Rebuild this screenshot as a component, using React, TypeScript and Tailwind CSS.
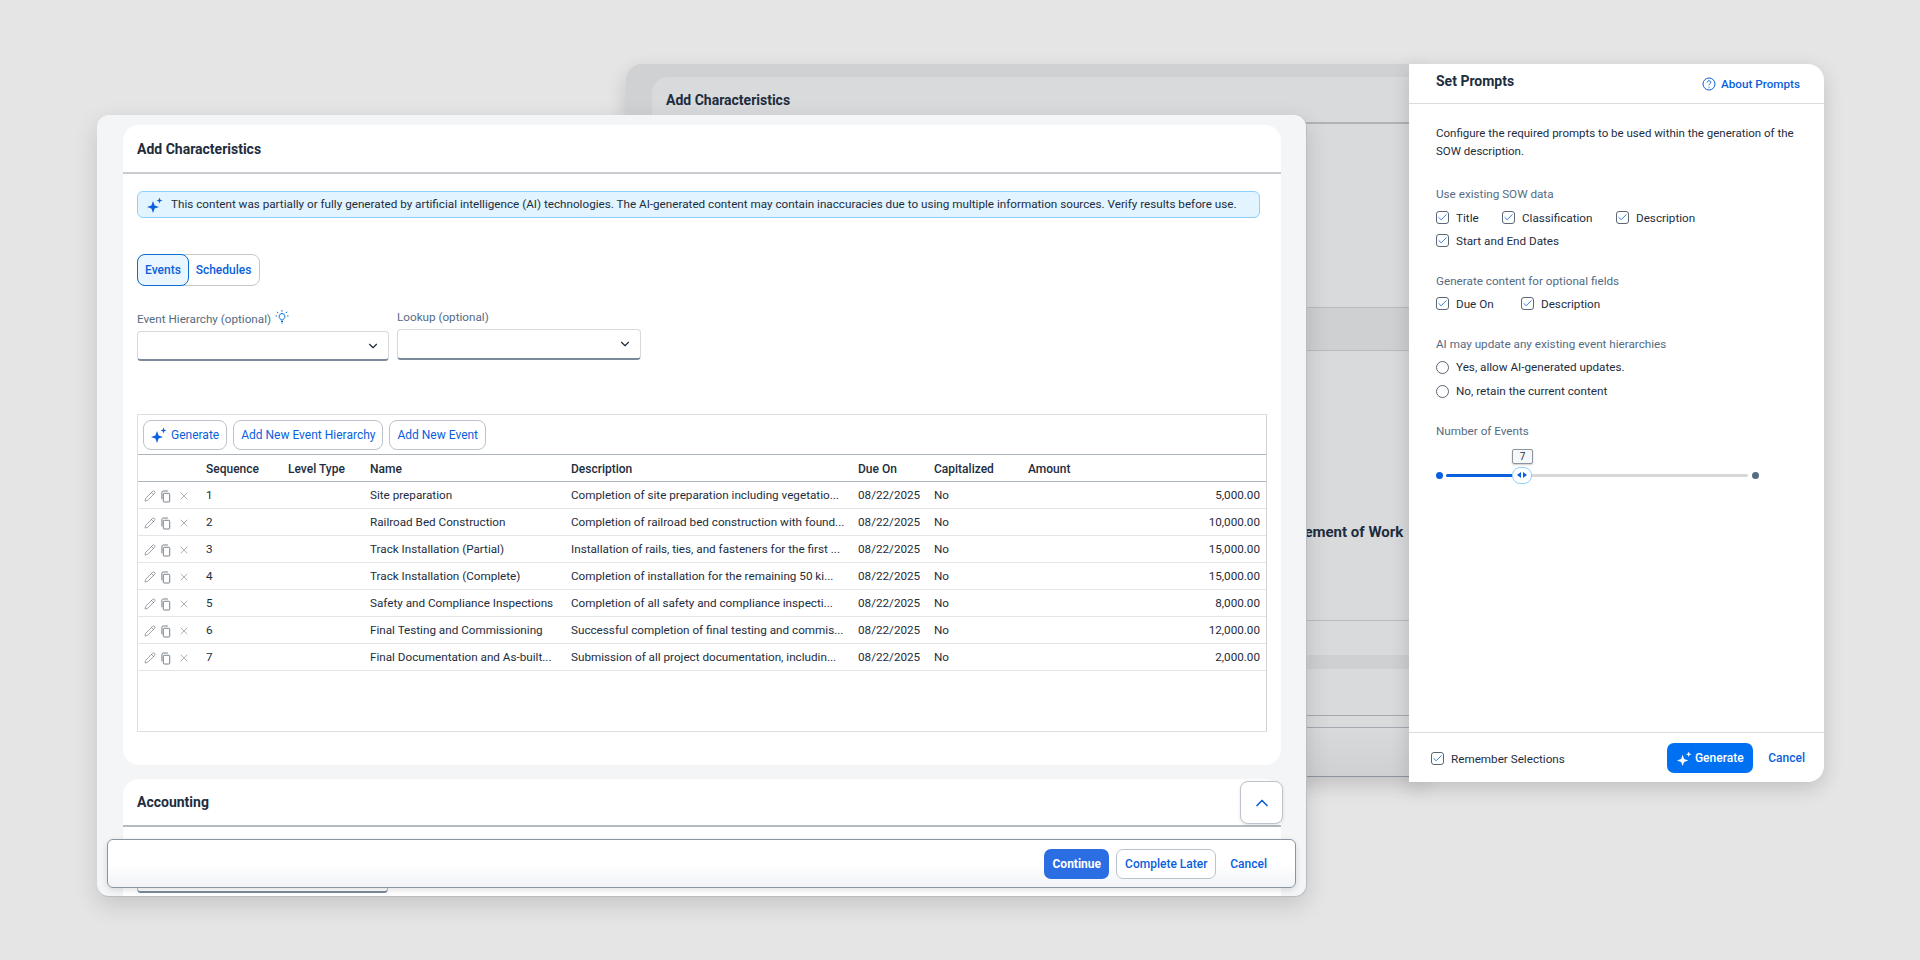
import { Check, ChevronDown, ChevronUp, Pencil, X } from "lucide-react";

const rows = [
  ["1", "Site preparation", "Completion of site preparation including vegetatio...", "5,000.00"],
  ["2", "Railroad Bed Construction", "Completion of railroad bed construction with found...", "10,000.00"],
  ["3", "Track Installation (Partial)", "Installation of rails, ties, and fasteners for the first ...", "15,000.00"],
  ["4", "Track Installation (Complete)", "Completion of installation for the remaining 50 ki...", "15,000.00"],
  ["5", "Safety and Compliance Inspections", "Completion of all safety and compliance inspecti...", "8,000.00"],
  ["6", "Final Testing and Commissioning", "Successful completion of final testing and commis...", "12,000.00"],
  ["7", "Final Documentation and As-built...", "Submission of all project documentation, includin...", "2,000.00"],
];

const gridCols = "grid grid-cols-[68px_82px_82px_201px_287px_76px_94px_1fr] items-center";

function Sparkle({ className }: { className?: string }) {
  return (
    <svg viewBox="0 0 16 16" className={`shrink-0 ${className ?? ""}`} fill="currentColor">
      <path d="M6 4L7.6 8.4L12 10L7.6 11.6L6 16L4.4 11.6L0 10L4.4 8.4Z" />
      <path d="M12.5 0.5L13.3 2.7L15.5 3.5L13.3 4.3L12.5 6.5L11.7 4.3L9.5 3.5L11.7 2.7Z" />
    </svg>
  );
}

function CopyIcon() {
  return (
    <svg viewBox="0 0 12 14" className="h-[13px] w-[11px]" fill="none" stroke="#6a7480" strokeWidth="1">
      <rect x="2.5" y="3.5" width="7" height="9.5" rx="1" />
      <path d="M1 10V2.5C1 1.6 1.6 1 2.5 1H7.5" />
    </svg>
  );
}

function Bulb() {
  return (
    <svg viewBox="0 0 16 16" className="h-4 w-4" fill="none" stroke="#0a6ed1" strokeWidth="1">
      <path d="M8 4.5a3 3 0 0 0-1.7 5.4c.4.3.6.7.6 1.1h2.2c0-.4.2-.8.6-1.1A3 3 0 0 0 8 4.5Z" />
      <path d="M7 12.5h2M7.4 14h1.2M8 1v1.6M3 2.8l1 1.2M13 2.8l-1 1.2M1.5 7h1.4M13.1 7h1.4" />
    </svg>
  );
}

function Tick({ label, className }: { label: string; className?: string }) {
  return (
    <div className={`flex h-[18px] items-center gap-[7px] ${className ?? ""}`}>
      <span className="flex h-[13px] w-[13px] items-center justify-center rounded-[3px] border border-[#5b6775] bg-white">
        <Check size={11} strokeWidth={1.75} className="text-[#0a5fdc]" />
      </span>
      <span className="pt-px text-[11.7px] leading-[18px] text-[#1d2d3e]">{label}</span>
    </div>
  );
}

function Radio({ label }: { label: string }) {
  return (
    <div className="flex h-[18px] items-center gap-[7px]">
      <span className="h-[13px] w-[13px] rounded-full border border-[#5b6775] bg-white" />
      <span className="text-[11.7px] leading-[18px] text-[#1d2d3e]">{label}</span>
    </div>
  );
}

function GroupLabel({ children, className }: { children: string; className?: string }) {
  return <div className={`text-[11.7px] leading-[18px] text-[#556b82] ${className ?? ""}`}>{children}</div>;
}

function Select({ className }: { className: string }) {
  return (
    <div className={`flex items-center justify-end rounded-[4px] border border-[#d5dadd] border-b-2 border-b-[#7b8a9a] bg-white pr-[8px] ${className}`}>
      <ChevronDown size={14} strokeWidth={2} className="text-[#1d2d3e]" />
    </div>
  );
}

function ToolbarButton({ children }: { children: React.ReactNode }) {
  return (
    <button className="flex h-[30px] items-center gap-[4px] rounded-[8px] border border-[#bcc3ca] bg-white px-[7px] text-[12px] text-[#0a5fdc]">
      {children}
    </button>
  );
}

function BackWindow() {
  return (
    <div className="absolute left-[626px] top-[64px] flex h-[713px] w-[800px] flex-col rounded-tl-[16px] bg-[#d0d1d2] pl-[26px] pt-[13px] shadow-[0_8px_20px_rgba(0,0,0,0.16)]">
      <div className="flex h-[47px] items-center rounded-tl-[16px] border-b-2 border-[#aeb3b8] bg-[#d9dadb] pl-[14px] pt-[2px] text-[14px] font-bold text-[#1d2d3e]">
        Add Characteristics
      </div>
      <div className="flex flex-1 flex-col bg-[#d9dadb]">
        <div className="h-[183px]" />
        <div className="h-[44px] border-y border-[#b7bcc1] bg-[#cfd0d2]" />
        <div className="flex h-[270px] flex-col border-b border-[#b7bcc1]">
          <div className="mt-[171px] pl-[625px] text-[15px] font-bold leading-[20px] whitespace-nowrap text-[#1d2d3e]">Statement of Work</div>
        </div>
        <div className="mt-[34px] h-[14px] bg-[#cfd0d2]" />
        <div className="mt-[46px] h-[13px] border-y border-[#a3a9b0]" />
        <div className="h-[48px] bg-gradient-to-b from-[#d9dadb] to-[#cfd0d1]" />
        <div className="h-px bg-[#8d949c]" />
      </div>
    </div>
  );
}

function MainWindow() {
  return (
    <div className="absolute left-[97px] top-[115px] h-[782px] w-[1210px] overflow-hidden rounded-[12px] border-r border-b border-[#b8bdc2] bg-[#f4f5f7] px-[26px] pt-[10px] shadow-[0_8px_24px_rgba(0,0,0,0.14)]">
      <section className="h-[640px] w-[1158px] rounded-[16px] bg-white">
        <h2 className="flex h-[49px] items-center border-b-2 border-[#c9cdd2] pl-[14px] pt-[2px] text-[14px] font-bold text-[#1d2d3e]">Add Characteristics</h2>
        <div className="px-[14px]">
          <div className="mt-[17px] flex h-[27px] w-[1123px] items-center gap-[8px] rounded-[6px] border border-[#8fd0fb] bg-[#e1f4ff] pl-[9px] text-[11.7px] text-[#1d2d3e]">
            <Sparkle className="h-[16px] w-[16px] text-[#0a5fdc]" />
            <span className="whitespace-nowrap">
              This content was partially or fully generated by artificial intelligence (AI) technologies. The AI-generated content may contain inaccuracies due to using multiple information sources. Verify results before use.
            </span>
          </div>

          <div className="mt-[36px] flex h-[32px] w-[123px] rounded-[8px] border border-[#c3c8cd] bg-white text-[12px] font-medium text-[#0a5fdc]">
            <span className="-m-px flex w-[52px] items-center justify-center rounded-[8px] border border-[#0a6ed1] bg-[#eaf6ff]">Events</span>
            <span className="flex flex-1 items-center justify-center">Schedules</span>
          </div>

          <div className="mt-[23px] flex gap-[8px]">
            <div className="w-[252px]">
              <div className="flex h-[19px] items-center gap-[3px] pt-[2px] text-[11.7px] text-[#556b82]">
                Event Hierarchy (optional)
                <span className="-mt-[6px]"><Bulb /></span>
              </div>
              <Select className="mt-[3px] h-[30px] w-[252px]" />
            </div>
            <div className="w-[244px]">
              <div className="-mt-px h-[19px] text-[11.7px] leading-[19px] text-[#556b82]">Lookup (optional)</div>
              <Select className="mt-[2px] h-[31px] w-[244px]" />
            </div>
          </div>

          <div className="mt-[53px] flex h-[318px] w-[1130px] flex-col border border-[#dde0e3] border-r-[#d0d4d8]">
            <div className="flex h-[40px] shrink-0 items-center gap-[6px] border-b border-[#aeb5bc] pl-[5px]">
              <ToolbarButton>
                <Sparkle className="h-[16px] w-[16px]" />
                Generate
              </ToolbarButton>
              <ToolbarButton>Add New Event Hierarchy</ToolbarButton>
              <ToolbarButton>Add New Event</ToolbarButton>
            </div>
            <div className={`${gridCols} h-[27px] shrink-0 border-b border-[#aeb5bc] pt-[2px] text-[12px] font-medium text-[#1d2d3e]`}>
              <span />
              <span>Sequence</span>
              <span>Level Type</span>
              <span>Name</span>
              <span>Description</span>
              <span>Due On</span>
              <span>Capitalized</span>
              <span>Amount</span>
            </div>
            {rows.map(([seq, name, desc, amount]) => (
              <div key={seq} className={`${gridCols} h-[27px] shrink-0 border-b border-[#e3e6e8] pt-[2px] text-[11.7px] text-[#1d2d3e]`}>
                <span className="flex items-center gap-[5px] pl-[6px]">
                  <Pencil size={12} strokeWidth={1.1} className="text-[#4f5a66]" />
                  <CopyIcon />
                  <X size={12} strokeWidth={1} className="ml-[1px] text-[#5b6775]" />
                </span>
                <span>{seq}</span>
                <span />
                <span className="whitespace-nowrap">{name}</span>
                <span className="whitespace-nowrap">{desc}</span>
                <span>08/22/2025</span>
                <span>No</span>
                <span className="pr-[6px] text-right">{amount}</span>
              </div>
            ))}
          </div>
        </div>
      </section>

      <section className="mt-[14px] h-[131px] w-[1158px] rounded-t-[16px] bg-white">
        <h2 className="flex h-[48px] items-center border-b-2 border-[#b4bac1] pl-[14px] text-[14px] font-bold text-[#1d2d3e]">Accounting</h2>
        <div className="ml-[14px] mt-[59px] h-[7px] w-[251px] rounded-b-[4px] border border-[#b7bdc4] border-b-2 border-b-[#7b8a9a]" />
      </section>

      <button className="absolute left-[1143px] top-[666px] flex h-[43px] w-[43px] items-center justify-center rounded-[8px] border border-[#bcc3ca] bg-white shadow-[0_1px_3px_rgba(0,0,0,0.12)]">
        <ChevronUp size={20} strokeWidth={2} className="text-[#0a5fdc]" />
      </button>

      <div className="absolute left-[10px] top-[724px] flex h-[49px] w-[1189px] items-center justify-end rounded-[6px] border border-[#8b95a0] bg-gradient-to-b from-white from-50% to-[#f1f3f5] pr-[28px] text-[12px] font-medium shadow-[0_2px_6px_rgba(0,0,0,0.12)]">
        <button className="mr-[7px] flex h-[30px] w-[65px] items-center justify-center rounded-[7px] bg-[#2b6de3] font-bold text-white">Continue</button>
        <button className="mr-[14px] flex h-[30px] w-[100px] items-center justify-center rounded-[7px] border border-[#bcc3ca] bg-white text-[#0a5fdc]">Complete Later</button>
        <button className="text-[#0a5fdc]">Cancel</button>
      </div>
    </div>
  );
}

function PromptsPanel() {
  return (
    <aside className="absolute left-[1409px] top-[64px] flex h-[718px] w-[415px] flex-col rounded-r-[16px] bg-white shadow-[0_6px_20px_rgba(0,0,0,0.16)]">
      <header className="flex h-[40px] shrink-0 items-start justify-between border-b border-[#d9dde1] pl-[27px] pr-[24px]">
        <h3 className="mt-[7px] text-[14px] font-bold leading-[20px] text-[#1d2d3e]">Set Prompts</h3>
        <a className="mt-[11px] flex items-center gap-[5px] text-[11.7px] font-medium leading-[18px] text-[#0a5fdc]">
          <svg viewBox="0 0 14 14" className="h-[14px] w-[14px]" fill="none" stroke="#0a5fdc" strokeWidth="1">
            <circle cx="7" cy="7" r="6" />
            <path d="M5.2 5.4C5.2 4.4 6 3.8 7 3.8s1.8.6 1.8 1.5c0 1.4-1.8 1.4-1.8 2.9M7 9.6v1" />
          </svg>
          About Prompts
        </a>
      </header>

      <div className="flex-1 px-[27px] pt-[20px]">
        <p className="text-[11.5px] leading-[18px] text-[#1d2d3e]">
          Configure the required prompts to be used within the generation of the SOW description.
        </p>

        <GroupLabel className="mt-[25px]">Use existing SOW data</GroupLabel>
        <div className="mt-[5px] flex">
          <Tick label="Title" className="w-[66px]" />
          <Tick label="Classification" className="w-[114px]" />
          <Tick label="Description" />
        </div>
        <Tick label="Start and End Dates" className="mt-[5px]" />

        <GroupLabel className="mt-[23px]">Generate content for optional fields</GroupLabel>
        <div className="mt-[4px] flex">
          <Tick label="Due On" className="w-[85px]" />
          <Tick label="Description" />
        </div>

        <GroupLabel className="mt-[23px]">AI may update any existing event hierarchies</GroupLabel>
        <div className="mt-[5px] flex flex-col gap-[6px]">
          <Radio label="Yes, allow AI-generated updates." />
          <Radio label="No, retain the current content" />
        </div>

        <GroupLabel className="mt-[22px]">Number of Events</GroupLabel>
        <div className="mt-[26px] flex h-[18px] w-[323px] items-center">
          <span className="h-[7px] w-[7px] rounded-full bg-[#0a5fdc]" />
          <span className="ml-[3px] h-[3px] w-[66px] rounded-l-full bg-[#0a5fdc]" />
          <span className="relative flex h-[17px] w-[20px] items-center justify-center gap-[2px] rounded-[8px] border border-[#8fd0fb] bg-white">
            <span className="absolute -top-[19px] left-[-1px] flex h-[15px] w-[21px] items-center justify-center rounded-[2px] border border-[#8b95a0] bg-[#f6f7f8] text-[10px] text-[#1d2d3e] shadow-[0_1px_2px_rgba(0,0,0,0.2)]">7</span>
            <span className="h-0 w-0 border-y-[3.5px] border-r-[4px] border-y-transparent border-r-[#0a5fdc]" />
            <span className="h-0 w-0 border-y-[3.5px] border-l-[4px] border-y-transparent border-l-[#0a5fdc]" />
          </span>
          <span className="h-[3px] flex-1 rounded-r-full bg-[#d5d7d9]" />
          <span className="ml-[4px] h-[7px] w-[7px] rounded-full bg-[#556b82]" />
        </div>
      </div>

      <footer className="flex h-[50px] shrink-0 items-center border-t border-[#d9dde1] pl-[22px] pr-[19px] pt-px">
        <Tick label="Remember Selections" />
        <button className="ml-auto flex h-[30px] w-[86px] items-center justify-center gap-[3px] rounded-[7px] bg-[#0070f2] text-[12px] font-medium text-white">
          <Sparkle className="h-[15px] w-[15px]" />
          Generate
        </button>
        <button className="ml-[15px] text-[12px] font-medium text-[#0a5fdc]">Cancel</button>
      </footer>
    </aside>
  );
}

export default function App() {
  return (
    <div className="relative h-[960px] w-[1920px] overflow-hidden bg-[#e5e5e5] font-['Roboto',sans-serif]">
      <BackWindow />
      <MainWindow />
      <PromptsPanel />
    </div>
  );
}
